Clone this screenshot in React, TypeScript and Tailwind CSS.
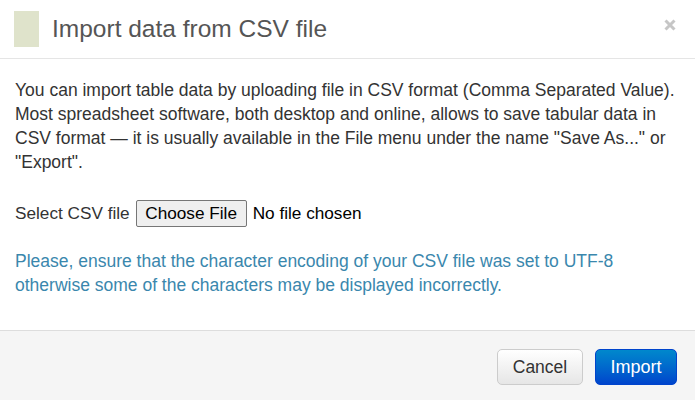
export default function App() {
  return (
    <div className="w-[695px] h-[400px] bg-white flex flex-col overflow-hidden text-[#333]" style={{ fontFamily: '"Liberation Sans", Arial, sans-serif' }}>
      <div className="h-[59px] border-b border-[#e5e5e5] flex items-center pl-[14px] pr-[19px] shrink-0">
        <div className="w-[25px] h-[36px] bg-[#dfe3cb] mr-[13px]" />
        <h3 className="text-[24.5px] leading-[30px] text-[#555] flex-1">Import data from CSV file</h3>
        <svg width="12" height="12" viewBox="0 0 12 12" className="mb-[8px]">
          <path d="M1.5 1.5L10.5 10.5M10.5 1.5L1.5 10.5" stroke="#c6c6c6" strokeWidth="3" />
        </svg>
      </div>
      <div className="flex-1 px-[15px] pt-[19px]">
        <p className="text-[17.5px] leading-[24px] whitespace-nowrap">
          You can import table data by uploading file in CSV format (Comma Separated Value).<br />
          Most spreadsheet software, both desktop and online, allows to save tabular data in<br />
          CSV format — it is usually available in the File menu under the name "Save As..." or<br />
          "Export".
        </p>
        <div className="mt-[26px] flex items-center text-[17.2px] h-[27px]">
          <span className="mr-[6px]">Select CSV file</span>
          <button className="h-[27px] w-[111px] bg-[#efefef] border border-[#767676] rounded-[2px] text-[17.2px] text-black">Choose File</button>
          <span className="ml-[6px] text-black">No file chosen</span>
        </div>
        <p className="mt-[22px] text-[17.5px] leading-[24px] text-[#3a87ad] whitespace-nowrap">
          Please, ensure that the character encoding of your CSV file was set to UTF-8<br />
          otherwise some of the characters may be displayed incorrectly.
        </p>
      </div>
      <div className="h-[70px] shrink-0 bg-[#f5f5f5] border-t border-[#ddd] flex items-start justify-end pt-[18px] pr-[18px] gap-[12px]">
        <button className="h-[36px] w-[86px] rounded-[5px] border border-[#ccc] bg-gradient-to-b from-white to-[#e6e6e6] text-[17.5px] text-[#333]">Cancel</button>
        <button className="h-[36px] w-[82px] rounded-[5px] border border-[#0044cc] bg-gradient-to-b from-[#0088cc] to-[#0044cc] text-[18px] text-white">Import</button>
      </div>
    </div>
  );
}
